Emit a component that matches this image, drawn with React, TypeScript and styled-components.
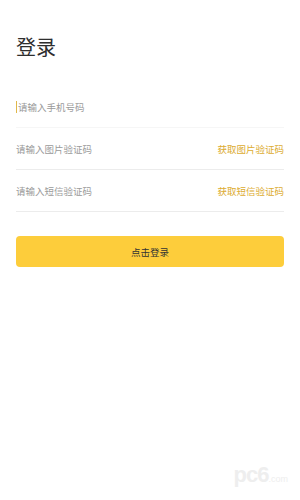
import React from 'react';
import styled, { createGlobalStyle } from 'styled-components';

const GlobalStyle = createGlobalStyle`
  html, body {
    margin: 0;
    padding: 0;
    background: #ffffff;
  }
  body {
    font-family: "Noto Sans CJK SC", "Noto Sans", sans-serif;
  }
`;

const rows = [
  { placeholder: '请输入手机号码', action: '', focused: true },
  { placeholder: '请输入图片验证码', action: '获取图片验证码', focused: false },
  { placeholder: '请输入短信验证码', action: '获取短信验证码', focused: false },
];

const App = () => {
  return (
    <Page>
      <GlobalStyle />
      <Title>登录</Title>
      <Form>
        {rows.map(row => (
          <Row key={row.placeholder} faint={row.focused}>
            <Field>
              {row.focused && <Caret />}
              <Placeholder>{row.placeholder}</Placeholder>
            </Field>
            {row.action && <Action>{row.action}</Action>}
          </Row>
        ))}
      </Form>
      <LoginButton type="button">点击登录</LoginButton>
      <Watermark>
        pc6<Dot>.com</Dot>
      </Watermark>
    </Page>
  );
};

export default App;

const Page = styled.div`
  position: relative;
  box-sizing: border-box;
  width: 300px;
  height: 500px;
  padding: 37px 16px 0;
  background: #ffffff;
  overflow: hidden;
`;

const Title = styled.h1`
  margin: 0;
  font-size: 20px;
  line-height: 20px;
  font-weight: 400;
  color: #2e2e2e;
`;

const Form = styled.div`
  display: flex;
  flex-direction: column;
  margin-top: 29px;
`;

const Row = styled.div<{ faint?: boolean }>`
  box-sizing: border-box;
  display: flex;
  align-items: center;
  justify-content: space-between;
  height: 42px;
  border-bottom: 1px solid ${({ faint }) => (faint ? '#f6f6f6' : '#ececec')};
`;

const Field = styled.div`
  display: flex;
  align-items: center;
`;

const Caret = styled.span`
  width: 1px;
  height: 12px;
  margin-right: 1px;
  background: #e0b84a;
`;

const Placeholder = styled.span`
  font-size: 9.5px;
  line-height: 12px;
  color: #9a9a9a;
`;

const Action = styled.span`
  font-size: 9.5px;
  line-height: 12px;
  color: #dcab2f;
`;

const LoginButton = styled.button`
  display: block;
  width: 100%;
  height: 31px;
  margin-top: 24px;
  padding: 0;
  border: none;
  border-radius: 4px;
  background: #fdcd3b;
  color: #333333;
  font-family: "Noto Sans CJK SC", "Noto Sans", sans-serif;
  font-size: 9.5px;
`;

const Watermark = styled.div`
  position: absolute;
  right: 12px;
  bottom: 12px;
  font-family: "Liberation Sans", sans-serif;
  font-size: 22px;
  font-weight: 700;
  letter-spacing: -1px;
  color: #eeeeee;
`;

const Dot = styled.span`
  font-size: 9px;
  font-weight: 400;
  letter-spacing: 0;
`;
